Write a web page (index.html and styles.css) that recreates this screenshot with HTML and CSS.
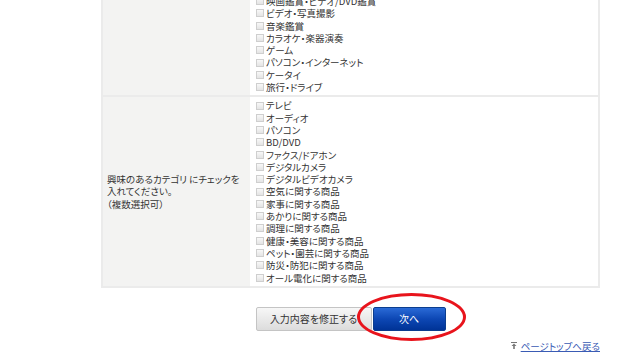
FILE: index.html
```html
<!DOCTYPE html>
<html lang="ja">
<head>
  <meta charset="UTF-8">
  <title>アンケート</title>
  <link rel="stylesheet" href="styles.css">
</head>
<body>
  <div class="page">
    <div class="form-table">
      <div class="form-row">
        <div class="form-label"></div>
        <div class="form-value">
          <label class="check"><span class="box"></span>映画鑑賞・ビデオ/DVD鑑賞</label>
          <label class="check"><span class="box"></span>ビデオ・写真撮影</label>
          <label class="check"><span class="box"></span>音楽鑑賞</label>
          <label class="check"><span class="box"></span>カラオケ・楽器演奏</label>
          <label class="check"><span class="box"></span>ゲーム</label>
          <label class="check"><span class="box"></span>パソコン・インターネット</label>
          <label class="check"><span class="box"></span>ケータイ</label>
          <label class="check"><span class="box"></span>旅行・ドライブ</label>
        </div>
      </div>
      <div class="form-row">
        <div class="form-label middle">
          <p>興味のあるカテゴリ にチェックを<br>入れてください。<br>（複数選択可）</p>
        </div>
        <div class="form-value">
          <label class="check"><span class="box"></span>テレビ</label>
          <label class="check"><span class="box"></span>オーディオ</label>
          <label class="check"><span class="box"></span>パソコン</label>
          <label class="check"><span class="box"></span>BD/DVD</label>
          <label class="check"><span class="box"></span>ファクス/ドアホン</label>
          <label class="check"><span class="box"></span>デジタルカメラ</label>
          <label class="check"><span class="box"></span>デジタルビデオカメラ</label>
          <label class="check"><span class="box"></span>空気に関する商品</label>
          <label class="check"><span class="box"></span>家事に関する商品</label>
          <label class="check"><span class="box"></span>あかりに関する商品</label>
          <label class="check"><span class="box"></span>調理に関する商品</label>
          <label class="check"><span class="box"></span>健康・美容に関する商品</label>
          <label class="check"><span class="box"></span>ペット・園芸に関する商品</label>
          <label class="check"><span class="box"></span>防災・防犯に関する商品</label>
          <label class="check"><span class="box"></span>オール電化に関する商品</label>
        </div>
      </div>
    </div>

    <div class="buttons">
      <button class="btn btn-back">入力内容を修正する</button>
      <div class="next-wrap">
        <button class="btn btn-next">次へ</button>
        <span class="circle"></span>
      </div>
    </div>

    <div class="pagetop">
      <svg class="pagetop-icon" width="6" height="7" viewBox="0 0 6 7">
        <rect x="0" y="0" width="6" height="1" fill="#777"/>
        <path d="M3 1.5 L5.5 4 L3.8 4 L3.8 7 L2.2 7 L2.2 4 L0.5 4 Z" fill="#777"/>
      </svg>
      <a href="#">ページトップへ戻る</a>
    </div>
  </div>
</body>
</html>
```

FILE: styles.css
```css
* {
  margin: 0;
  padding: 0;
  box-sizing: border-box;
}

body {
  font-family: "Noto Sans CJK JP", "Noto Sans", sans-serif;
  font-feature-settings: "palt";
  font-size: 9.5px;
  color: #333333;
  background: #ffffff;
  overflow: hidden;
}

.page {
  width: 499px;
  margin-left: 101px;
  margin-top: -9px;
}

.form-table {
  border: 2px solid #ebebeb;
}

.form-row {
  display: grid;
  grid-template-columns: 147px 1fr;
}

.form-row + .form-row {
  border-top: 2px solid #ebebeb;
}

.form-label {
  background: #f3f3f2;
  padding: 0 4px;
  line-height: 12.5px;
  white-space: nowrap;
}

.form-label.middle {
  display: flex;
  align-items: center;
}

.form-value {
  padding: 2px 0 2px 6px;
  display: flex;
  flex-direction: column;
}

.check {
  display: flex;
  align-items: center;
  height: 12.3px;
  line-height: 12.3px;
  white-space: nowrap;
}

.box {
  width: 8px;
  height: 8px;
  margin-right: 2px;
  border: 1px solid #cfcfcf;
  background: linear-gradient(#f8f8f8, #e4e4e4);
  flex-shrink: 0;
}

.buttons {
  display: flex;
  justify-content: center;
  gap: 1px;
  margin-top: 19px;
}

.btn {
  font-family: inherit;
  font-feature-settings: "palt";
  font-size: 10px;
  height: 24px;
  border-radius: 2px;
  cursor: pointer;
}

.btn-back {
  width: 116px;
  color: #333333;
  border: 1px solid #c4c4c4;
  background: linear-gradient(#f7f7f7, #dcdcdc);
}

.next-wrap {
  position: relative;
}

.btn-next {
  width: 73px;
  color: #ffffff;
  border: 1px solid #0b3d8f;
  background: linear-gradient(#2a6ad6, #0d47b4 50%, #003396);
}

.circle {
  position: absolute;
  left: -16px;
  top: -14px;
  width: 109px;
  height: 48px;
  border: 3px solid #e8141c;
  border-radius: 50%;
  pointer-events: none;
}

.pagetop {
  display: flex;
  justify-content: flex-end;
  align-items: center;
  gap: 4px;
  margin-top: 8px;
  font-size: 9.5px;
}

.pagetop a {
  color: #3a5bb4;
  text-decoration: underline;
}
```
